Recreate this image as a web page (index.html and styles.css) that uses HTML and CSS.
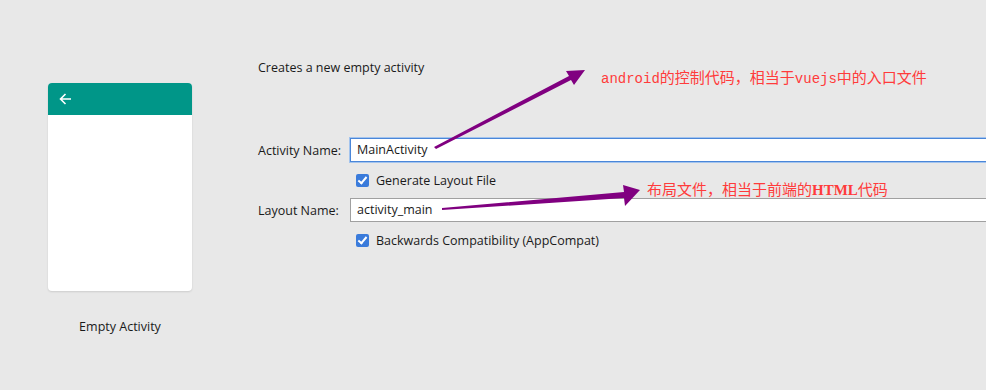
FILE: index.html
```html
<!DOCTYPE html>
<html lang="zh-CN">
<head>
  <meta charset="UTF-8">
  <title>New Activity</title>
  <link rel="stylesheet" href="styles.css">
</head>
<body>
  <div class="page">
    <div class="preview">
      <div class="phone">
        <div class="appbar">
          <svg class="back" width="14" height="14" viewBox="0 0 14 14">
            <path d="M13 7H2.5M7.5 2 2.5 7l5 5" fill="none" stroke="#fff" stroke-width="1.6"/>
          </svg>
        </div>
      </div>
      <div class="caption">Empty Activity</div>
    </div>

    <div class="form">
      <p class="desc">Creates a new empty activity</p>

      <div class="row">
        <label class="label">Activity Name:</label>
        <div class="field focused">MainActivity</div>
      </div>
      <div class="check-row">
        <span class="check"></span>
        <span>Generate Layout File</span>
      </div>
      <div class="row">
        <label class="label">Layout Name:</label>
        <div class="field">activity_main</div>
      </div>
      <div class="check-row">
        <span class="check"></span>
        <span>Backwards Compatibility (AppCompat)</span>
      </div>
    </div>
  </div>

  <!-- annotations drawn on top of the screenshot -->
  <svg class="notes" width="986" height="390">
    <polygon fill="#800080" points="434,147 436,149 571,80 574,85 585,70 566,71 569,76"/>
    <polygon fill="#800080" points="442,208 442,210 624,198 625,206 640,190 623,185 624,192"/>
  </svg>
  <div class="note note-1"><span class="mono">android</span>的控制代码，相当于<span class="mono">vuejs</span>中的入口文件</div>
  <div class="note note-2">布局文件，相当于前端的<span class="serif">HTML</span>代码</div>
</body>
</html>
```

FILE: styles.css
```css
body {
  margin: 0;
  width: 986px;
  height: 390px;
  overflow: hidden;
  background-color: #e8e8e8;
  font-family: "Open Sans", "DejaVu Sans", sans-serif;
  font-size: 12.5px;
  color: #1a1a1a;
  position: relative;
}
.page {
  display: flex;
  gap: 66px;
  padding-left: 48px;
}
.preview {
  width: 144px;
  padding-top: 83px;
}
.phone {
  height: 208px;
  background-color: #ffffff;
  border-radius: 4px;
  box-shadow: 0 1px 2px rgba(0, 0, 0, 0.12);
  overflow: hidden;
}
.appbar {
  height: 32px;
  background-color: #009688;
  display: flex;
  align-items: center;
  padding-left: 10px;
}
.caption {
  margin-top: 28px;
  text-align: center;
  line-height: 16px;
}
.form {
  flex: 1;
  padding-top: 60px;
}
.desc {
  margin: 0 0 62px;
  line-height: 16px;
}
.row {
  display: flex;
  align-items: center;
  height: 24px;
}
.label {
  width: 92px;
  flex-shrink: 0;
}
.field {
  flex: 1;
  height: 22px;
  line-height: 22px;
  padding-left: 6px;
  background-color: #ffffff;
  border: 1px solid #a0a0a0;
  border-right: none;
}
.field.focused {
  border-color: #4a86d8;
  box-shadow: 0 0 0 1px #a3c4ee;
}
.check-row {
  display: flex;
  align-items: center;
  gap: 7px;
  height: 20px;
  margin: 8px 0 8px 98px;
}
.check {
  width: 13px;
  height: 13px;
  border-radius: 2px;
  background-color: #3a7bdb;
  position: relative;
}
.check::after {
  content: "";
  position: absolute;
  left: 4px;
  top: 1px;
  width: 3px;
  height: 7px;
  border: solid #ffffff;
  border-width: 0 2px 2px 0;
  transform: rotate(40deg);
}
.notes {
  position: absolute;
  left: 0;
  top: 0;
}
.note {
  position: absolute;
  color: #ff3b3b;
  font-family: "Noto Sans CJK SC", sans-serif;
  font-size: 15px;
  line-height: 18px;
  white-space: nowrap;
}
.note-1 {
  left: 601px;
  top: 68px;
}
.note-2 {
  left: 647px;
  top: 180px;
}
.mono {
  font-family: "Liberation Mono", monospace;
  font-size: 14px;
}
.serif {
  font-family: "Liberation Serif", serif;
  font-weight: bold;
}
```
